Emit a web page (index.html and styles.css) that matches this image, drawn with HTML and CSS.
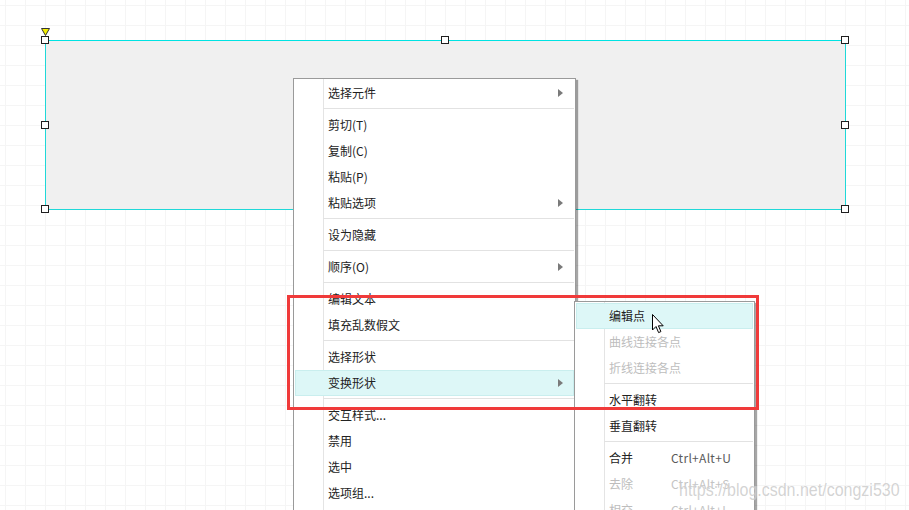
FILE: index.html
```html
<!DOCTYPE html>
<html lang="zh-CN">
<head>
<meta charset="utf-8">
<title>变换形状</title>
<link rel="stylesheet" href="styles.css">
</head>
<body>
<div class="canvas">
  <div class="shape"></div>
  <svg class="anchor" width="10" height="9" viewBox="0 0 10 9"><path d="M0.5 0.5 H8.5 L4.5 7.5 Z" fill="#f4f000" stroke="#333" stroke-width="1"/></svg>
  <div class="handle h-tl"></div>
  <div class="handle h-tm"></div>
  <div class="handle h-tr"></div>
  <div class="handle h-ml"></div>
  <div class="handle h-mr"></div>
  <div class="handle h-bl"></div>
  <div class="handle h-br"></div>

  <div class="menu main-menu">
    <div class="item has-sub"><span class="label">选择元件</span><span class="arrow"></span></div>
    <div class="sep"></div>
    <div class="item"><span class="label">剪切(T)</span></div>
    <div class="item"><span class="label">复制(C)</span></div>
    <div class="item"><span class="label">粘贴(P)</span></div>
    <div class="item has-sub"><span class="label">粘贴选项</span><span class="arrow"></span></div>
    <div class="sep"></div>
    <div class="item"><span class="label">设为隐藏</span></div>
    <div class="sep"></div>
    <div class="item has-sub"><span class="label">顺序(O)</span><span class="arrow"></span></div>
    <div class="sep"></div>
    <div class="item"><span class="label">编辑文本</span></div>
    <div class="item"><span class="label">填充乱数假文</span></div>
    <div class="sep"></div>
    <div class="item"><span class="label">选择形状</span></div>
    <div class="item has-sub active"><span class="label">变换形状</span><span class="arrow"></span></div>
    <div class="sep"></div>
    <div class="item"><span class="label">交互样式...</span></div>
    <div class="item"><span class="label">禁用</span></div>
    <div class="item"><span class="label">选中</span></div>
    <div class="item"><span class="label">选项组...</span></div>
    <div class="item"><span class="label">工具提示...</span></div>
  </div>

  <div class="menu sub-menu">
    <div class="item active"><span class="label">编辑点</span></div>
    <div class="item disabled"><span class="label">曲线连接各点</span></div>
    <div class="item disabled"><span class="label">折线连接各点</span></div>
    <div class="sep"></div>
    <div class="item"><span class="label">水平翻转</span></div>
    <div class="item"><span class="label">垂直翻转</span></div>
    <div class="sep"></div>
    <div class="item"><span class="label short">合并</span><span class="shortcut">Ctrl+Alt+U</span></div>
    <div class="item disabled"><span class="label short">去除</span><span class="shortcut">Ctrl+Alt+S</span></div>
    <div class="item disabled"><span class="label short">相交</span><span class="shortcut">Ctrl+Alt+I</span></div>
  </div>

  <div class="redbox"></div>

  <svg class="cursor" width="13" height="20" viewBox="0 0 13 20"><path d="M0.5 0.5 V16 L4 12.5 L6.6 18.6 L8.9 17.6 L6.4 11.8 H11.2 Z" fill="#fff" stroke="#000" stroke-width="1" stroke-linejoin="miter"/></svg>

  <div class="watermark">https://blog.csdn.net/congzi530</div>
</div>
</body>
</html>
```

FILE: styles.css
```css
html, body {
  margin: 0;
  padding: 0;
}
body {
  width: 909px;
  height: 510px;
  overflow: hidden;
  background-color: #ffffff;
  font-family: "Noto Sans CJK SC", "Noto Sans", sans-serif;
}
.canvas {
  position: relative;
  width: 909px;
  height: 510px;
  overflow: hidden;
  background-color: #fff;
  background-image:
    linear-gradient(to right, #f5f5f5 1px, transparent 1px),
    linear-gradient(to bottom, #f5f5f5 1px, transparent 1px);
  background-size: 20px 20px;
  background-position: 5px 5px;
}
.shape {
  position: absolute;
  left: 45px;
  top: 40px;
  width: 801px;
  height: 170px;
  box-sizing: border-box;
  background: #f0f0f0;
  border: 1px solid #1fd8d8;
  border-top-color: #00e3e3;
}
.anchor {
  position: absolute;
  left: 41px;
  top: 28px;
}
.handle {
  position: absolute;
  width: 8px;
  height: 8px;
  box-sizing: border-box;
  background: #fff;
  border: 1px solid #1f1f1f;
}
.h-tl { left: 41px; top: 36px; }
.h-tm { left: 441px; top: 36px; }
.h-tr { left: 841px; top: 36px; }
.h-ml { left: 41px; top: 121px; }
.h-mr { left: 841px; top: 121px; }
.h-bl { left: 41px; top: 205px; }
.h-br { left: 841px; top: 205px; }

.menu {
  position: absolute;
  box-sizing: border-box;
  padding: 1px 0;
  border: 1px solid #9a9a9a;
  background-color: #fff;
  background-image: linear-gradient(to right, transparent 29px, #e4e4e4 29px, #e4e4e4 30px, transparent 30px);
  box-shadow: 2px 2px 1px rgba(0, 0, 0, 0.35);
  font-size: 12px;
  color: #222;
}
.main-menu {
  left: 293px;
  top: 78px;
  width: 283px;
}
.sub-menu {
  left: 574px;
  top: 301px;
  width: 181px;
}
.item {
  display: flex;
  align-items: center;
  height: 26px;
  box-sizing: border-box;
  margin: 0 1px;
  padding: 0 10px 0 32px;
  border: 1px solid transparent;
  line-height: 1;
  white-space: nowrap;
}
.item.active {
  background: #ddf7f7;
  border-color: #c9eeee;
}
.item.disabled {
  color: #bdbdbd;
}
.label.short {
  width: 62px;
}
.arrow {
  margin-left: auto;
  width: 0;
  height: 0;
  border-left: 5px solid #7a7a7a;
  border-top: 4px solid transparent;
  border-bottom: 4px solid transparent;
}
.shortcut {
  color: #5a5a5a;
  letter-spacing: 0.3px;
}
.item.disabled .shortcut {
  color: #c4c4c4;
}
.sep {
  height: 6px;
  margin: 0 1px 0 29px;
  background: linear-gradient(to bottom, transparent 2px, #e2e2e2 2px, #e2e2e2 3px, transparent 3px);
}
.redbox {
  position: absolute;
  left: 287px;
  top: 295px;
  width: 472px;
  height: 115px;
  box-sizing: border-box;
  border: 3px solid #f03a3a;
}
.cursor {
  position: absolute;
  left: 652px;
  top: 314px;
}
.watermark {
  position: absolute;
  left: 679px;
  top: 478px;
  font-family: "Liberation Sans", Arial, sans-serif;
  font-size: 16px;
  line-height: 20px;
  color: rgba(175, 175, 175, 0.55);
  white-space: nowrap;
  transform: scaleY(1.18);
  transform-origin: left top;
  text-shadow: 0 0 1px rgba(255, 255, 255, 0.8);
}
```
